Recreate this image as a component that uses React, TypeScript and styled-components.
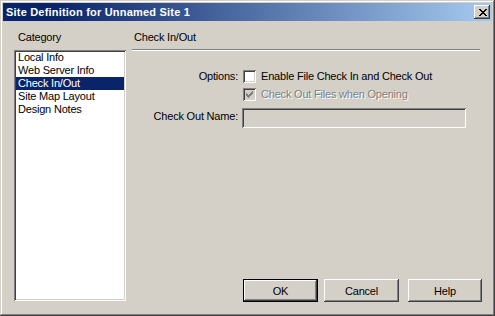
import styled, { createGlobalStyle } from "styled-components";

const GlobalStyle = createGlobalStyle`
  html, body {
    margin: 0;
    padding: 0;
    background: #d4d0c8;
  }
  * {
    box-sizing: border-box;
  }
`;

const categories = [
  "Local Info",
  "Web Server Info",
  "Check In/Out",
  "Site Map Layout",
  "Design Notes",
];

const raised = `
  box-shadow: inset -1px -1px #404040, inset 1px 1px #ffffff,
    inset -2px -2px #808080, inset 2px 2px #d4d0c8;
`;

const sunken = `
  box-shadow: inset 1px 1px #808080, inset -1px -1px #ffffff,
    inset 2px 2px #404040, inset -2px -2px #d4d0c8;
`;

function App() {
  return (
    <>
      <GlobalStyle />
      <Window>
        <TitleBar>
          <TitleText>Site Definition for Unnamed Site 1</TitleText>
          <CloseButton>
            <svg width="8" height="7" viewBox="0 0 8 7">
              <path
                d="M0 0h2v1h1v1h2v-1h1v-1h2v1h-1v1h-1v1h-1v1h1v1h1v1h1v1h-2v-1h-1v-1h-2v1h-1v1h-2v-1h1v-1h1v-1h1v-1h-1v-1h-1v-1h-1z"
                fill="#000"
              />
            </svg>
          </CloseButton>
        </TitleBar>
        <Body>
          <LeftColumn>
            <Label>Category</Label>
            <CategoryList>
              {categories.map((c) => (
                <CategoryItem key={c} $selected={c === "Check In/Out"}>
                  {c}
                </CategoryItem>
              ))}
            </CategoryList>
          </LeftColumn>
          <RightColumn>
            <Label>Check In/Out</Label>
            <Separator />
            <Form>
              <FieldLabel>Options:</FieldLabel>
              <CheckRow>
                <CheckBox />
                <Label>Enable File Check In and Check Out</Label>
              </CheckRow>
              <span />
              <CheckRow>
                <CheckBox $disabled>
                  <svg width="7" height="7" viewBox="0 0 7 7">
                    <path
                      d="M0 2h1v1h1v1h1v-1h1v-1h1v-1h1v-1h1v3h-1v1h-1v1h-1v1h-1v1h-1v-1h-1v-1h-1z"
                      fill="#808080"
                    />
                  </svg>
                </CheckBox>
                <DisabledText>Check Out Files when Opening</DisabledText>
              </CheckRow>
              <FieldLabel>Check Out Name:</FieldLabel>
              <NameInput />
            </Form>
            <Footer>
              <DialogButton $width={75} $default>
                OK
              </DialogButton>
              <DialogButton $width={75} $gap={6}>
                Cancel
              </DialogButton>
              <DialogButton $width={74} $gap={9}>
                Help
              </DialogButton>
            </Footer>
          </RightColumn>
        </Body>
      </Window>
    </>
  );
}

export default App;

const Window = styled.div`
  width: 495px;
  height: 316px;
  padding: 3px;
  display: flex;
  flex-direction: column;
  background: #d4d0c8;
  font-family: "Liberation Sans", Arial, sans-serif;
  font-size: 11px;
  letter-spacing: -0.2px;
  color: #000;
  box-shadow: inset -1px -1px #404040, inset 1px 1px #d4d0c8,
    inset -2px -2px #808080, inset 2px 2px #ffffff;
`;

const TitleBar = styled.div`
  height: 18px;
  display: flex;
  align-items: center;
  justify-content: space-between;
  padding: 0 2px 0 3px;
  background: linear-gradient(to right, #0a246a 10%, #a6caf0);
`;

const TitleText = styled.span`
  color: #fff;
  font-weight: bold;
  font-size: 11px;
  letter-spacing: 0.2px;
  white-space: nowrap;
`;

const CloseButton = styled.div`
  width: 16px;
  height: 14px;
  display: flex;
  align-items: center;
  justify-content: center;
  padding-left: 1px;
  background: #d4d0c8;
  ${raised}
`;

const Body = styled.div`
  flex: 1;
  display: flex;
  padding: 10px 12px 12px 11px;
  gap: 6px;
`;

const LeftColumn = styled.div`
  width: 112px;
  display: flex;
  flex-direction: column;
`;

const Label = styled.div`
  line-height: 13px;
  white-space: nowrap;
  padding-left: 4px;
`;

const CategoryList = styled.div`
  flex: 1;
  margin-top: 6px;
  padding: 1px 2px 2px 2px;
  background: #fff;
  ${sunken}
`;

const CategoryItem = styled.div<{ $selected?: boolean }>`
  height: 13px;
  line-height: 13px;
  padding-left: 2px;
  white-space: nowrap;
  background: ${(p) => (p.$selected ? "#0a246a" : "transparent")};
  color: ${(p) => (p.$selected ? "#fff" : "#000")};
`;

const RightColumn = styled.div`
  flex: 1;
  display: flex;
  flex-direction: column;
  & > ${Label} {
    padding-left: 2px;
  }
`;

const Separator = styled.div`
  height: 2px;
  margin-top: 5px;
  border-top: 1px solid #808080;
  border-bottom: 1px solid #ffffff;
`;

const Form = styled.div`
  display: grid;
  grid-template-columns: 106px 1fr;
  grid-template-rows: 13px 13px 20px;
  row-gap: 5px;
  column-gap: 4px;
  margin-top: 19px;
  align-items: center;
`;

const FieldLabel = styled.div`
  text-align: right;
  white-space: nowrap;
  line-height: 13px;
`;

const CheckRow = styled.div`
  display: flex;
  align-items: center;
  gap: 1px;
  padding-left: 1px;
`;

const CheckBox = styled.div<{ $disabled?: boolean }>`
  width: 13px;
  height: 13px;
  flex-shrink: 0;
  display: flex;
  align-items: center;
  justify-content: center;
  background: ${(p) => (p.$disabled ? "#d4d0c8" : "#fff")};
  ${sunken}
`;

const DisabledText = styled.div`
  padding-left: 4px;
  line-height: 13px;
  white-space: nowrap;
  color: #808080;
  text-shadow: 1px 1px 0 #ffffff;
`;

const NameInput = styled.div`
  width: 224px;
  height: 20px;
  margin-top: 3px;
  background: #d4d0c8;
  ${sunken}
`;

const Footer = styled.div`
  margin-top: auto;
  margin-right: -2px;
  margin-bottom: -1px;
  display: flex;
  justify-content: flex-end;
`;

const DialogButton = styled.div<{ $width: number; $gap?: number; $default?: boolean }>`
  width: ${(p) => p.$width}px;
  height: 23px;
  margin-left: ${(p) => p.$gap ?? 0}px;
  display: flex;
  align-items: center;
  justify-content: center;
  background: #d4d0c8;
  ${(p) =>
    p.$default
      ? `box-shadow: inset 0 0 0 1px #000000, inset -2px -2px #404040,
          inset 2px 2px #ffffff, inset -3px -3px #808080;`
      : raised}
`;
